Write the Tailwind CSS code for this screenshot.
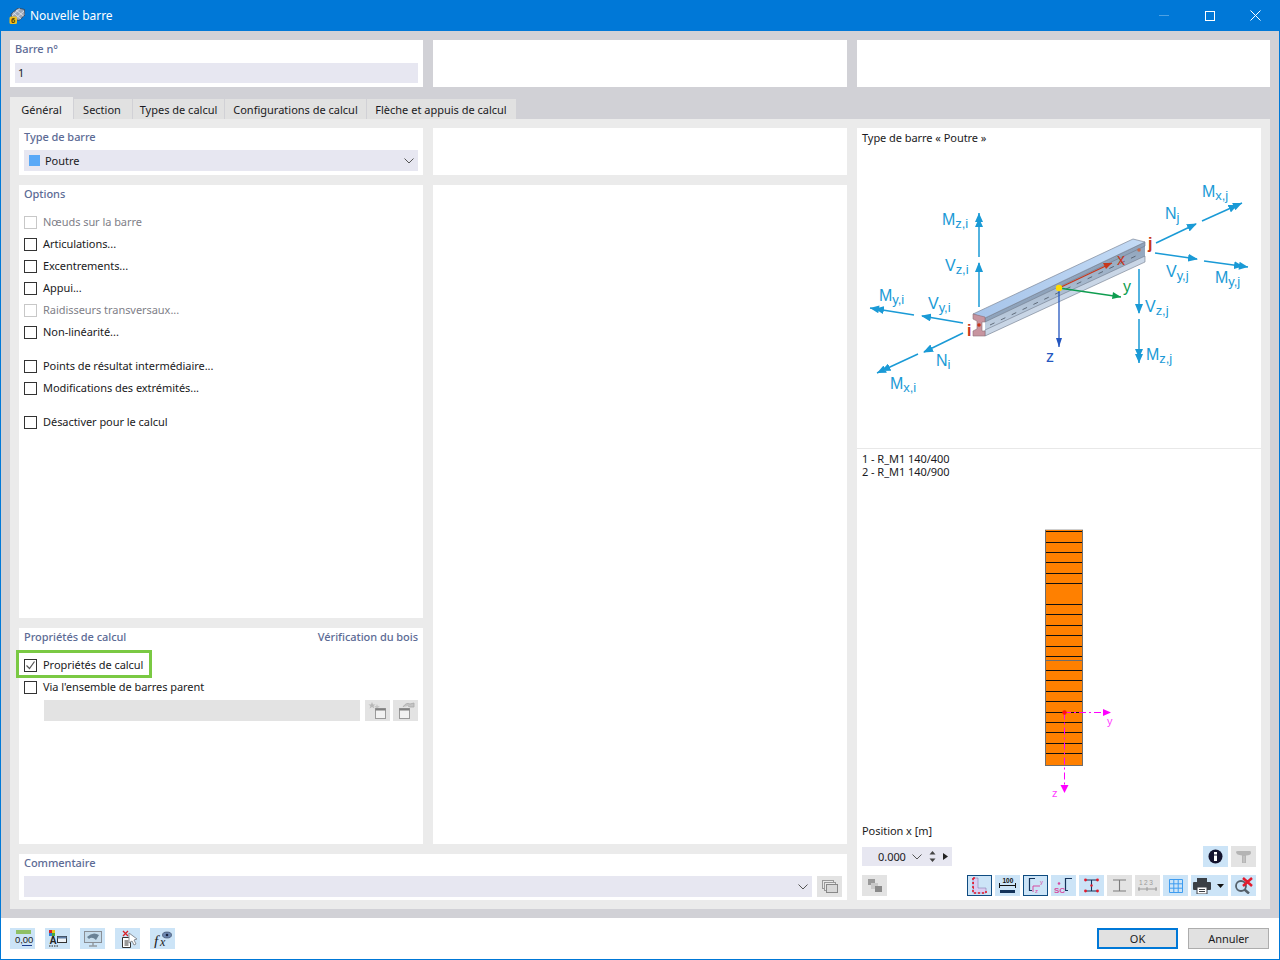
<!DOCTYPE html>
<html lang="fr">
<head>
<meta charset="UTF-8">
<title>Nouvelle barre</title>
<script src="https://cdn.jsdelivr.net/npm/@tailwindcss/browser@4"></script>
</head>
<body class="bg-white font-['Noto_Sans',sans-serif] text-[11px] leading-none tracking-[-0.05px] text-[#1a1a22]">
<div class="w-[1280px] h-[960px] flex flex-col border-x border-b border-[#0078d7] overflow-hidden">

  <!-- Title bar -->
  <div class="h-[31px] -mx-px bg-[#0078d7] flex items-center text-white text-[12px] shrink-0">
    <svg class="ml-[9px] w-[16px] h-[16px]" viewBox="0 0 16 16">
      <path d="M2 6 L9 0 L15.500 1.500 L16 7 L10 12.500 L3 10.500 Z" fill="#9aa6b8" stroke="#2e3644" stroke-width=".7"/>
      <path d="M4 4.500 L12 11 M7 2 L14.500 8 M3 8 L11 .5 M6 11 L15 3" stroke="#eef1f5" stroke-width=".7"/>
      <rect x=".5" y="8.500" width="7.500" height="7.500" rx="1.500" fill="#f0c01e"/>
      <text x="2" y="15" font-size="7.500" font-weight="700" fill="#4f3c00" font-family="Liberation Sans, sans-serif">6</text>
    </svg>
    <span class="ml-[5px]">Nouvelle barre</span>
    <div class="ml-auto flex items-center">
      <div class="w-[10px] h-px bg-[#4da1e3] mr-[36px]"></div>
      <div class="w-[10px] h-[10px] border border-white mr-[35px]"></div>
      <svg class="w-[11px] h-[11px] mr-[19px]" viewBox="0 0 11 11"><path d="M.5 .5 L10.500 10.500 M10.500 .5 L.5 10.500" stroke="#fff" stroke-width="1"/></svg>
    </div>
  </div>

  <!-- Dialog body -->
  <div class="flex-1 bg-[#d1d1d6] px-[9px] pt-[9px] flex flex-col">
    <div class="grid grid-cols-[413px_414px_413px] gap-x-[10px] h-[47px] shrink-0">
      <div class="bg-white px-[5px]">
        <div class="h-[23px] pt-[3px] text-[#5c6b95] font-medium">Barre n°</div>
        <div class="h-[20px] bg-[#e7e7f1] flex items-center px-[3px]"><span class="pb-[2px]">1</span></div>
      </div>
      <div class="bg-white"></div>
      <div class="bg-white"></div>
    </div>

    <!-- Tabs -->
    <div class="flex items-end h-[22px] mt-[10px] shrink-0 gap-px tracking-normal">
      <div class="h-[22px] w-[63px] bg-[#ebebeb] flex items-center justify-center pt-[2px]">Général</div>
      <div class="h-[20px] w-[58px] bg-[#e1e1e1] flex items-center justify-center pr-[2px]">Section</div>
      <div class="h-[20px] w-[91px] bg-[#e1e1e1] flex items-center justify-center">Types de calcul</div>
      <div class="h-[20px] w-[141px] bg-[#e1e1e1] flex items-center justify-center">Configurations de calcul</div>
      <div class="h-[20px] w-[149px] bg-[#e1e1e1] flex items-center justify-center pr-[1px]">Flèche et appuis de calcul</div>
    </div>

    <div class="h-[790px] bg-[#ebebeb] p-[9px] flex gap-x-[10px]">
      <!-- Left area -->
      <div class="w-[828px] flex flex-col gap-y-[10px]">
        <div class="h-[716px] grid grid-cols-[404px_414px] gap-x-[10px]">
          <div class="flex flex-col gap-y-[10px]">
            <div class="h-[47px] bg-white px-[5px]">
              <div class="h-[22px] pt-[3px] text-[#5c6b95] font-medium">Type de barre</div>
              <div class="h-[21px] bg-[#e7e7f1] flex items-center pl-[5px] pr-[4px]">
                <span class="w-[11px] h-[11px] bg-[#5aa9f7] mr-[5px]"></span>Poutre
                <svg class="ml-auto w-[10px] h-[6px]" viewBox="0 0 10 6"><path d="M.5 .5 L5 5 L9.500 .5" fill="none" stroke="#555" stroke-width="1"/></svg>
              </div>
            </div>
            <div class="h-[433px] bg-white px-[5px]">
              <div class="h-[26px] pt-[3px] text-[#5c6b95] font-medium">Options</div>
              <div class="h-[22px] flex items-center text-[#808088]"><span class="w-[13px] h-[13px] border border-[#c8c8c8] mr-[6px]"></span><span class="pb-[2px]">Nœuds sur la barre</span></div>
              <div class="h-[22px] flex items-center"><span class="w-[13px] h-[13px] border border-[#333] mr-[6px]"></span><span class="pb-[2px]">Articulations...</span></div>
              <div class="h-[22px] flex items-center"><span class="w-[13px] h-[13px] border border-[#333] mr-[6px]"></span><span class="pb-[2px]">Excentrements...</span></div>
              <div class="h-[22px] flex items-center"><span class="w-[13px] h-[13px] border border-[#333] mr-[6px]"></span><span class="pb-[2px]">Appui...</span></div>
              <div class="h-[22px] flex items-center text-[#808088]"><span class="w-[13px] h-[13px] border border-[#c8c8c8] mr-[6px]"></span><span class="pb-[2px]">Raidisseurs transversaux...</span></div>
              <div class="h-[22px] flex items-center"><span class="w-[13px] h-[13px] border border-[#333] mr-[6px]"></span><span class="pb-[2px]">Non-linéarité...</span></div>
              <div class="h-[22px] mt-[12px] flex items-center"><span class="w-[13px] h-[13px] border border-[#333] mr-[6px]"></span><span class="pb-[2px]">Points de résultat intermédiaire...</span></div>
              <div class="h-[22px] flex items-center"><span class="w-[13px] h-[13px] border border-[#333] mr-[6px]"></span><span class="pb-[2px]">Modifications des extrémités...</span></div>
              <div class="h-[22px] mt-[12px] flex items-center"><span class="w-[13px] h-[13px] border border-[#333] mr-[6px]"></span><span class="pb-[2px]">Désactiver pour le calcul</span></div>
            </div>
            <div class="h-[216px] bg-white px-[5px]">
              <div class="h-[26px] pt-[3px] flex justify-between text-[#5c6b95] font-medium"><span>Propriétés de calcul</span><span>Vérification du bois</span></div>
              <div class="relative h-[22px] flex items-center">
                <div class="absolute left-[-8px] top-[-4px] w-[136px] h-[28px] border-[3px] border-[#7ac943]"></div>
                <span class="w-[13px] h-[13px] border border-[#333] mr-[6px] flex items-center justify-center">
                  <svg class="w-[11px] h-[11px]" viewBox="0 0 11 11"><path d="M1.500 5.500 L4.500 8.500 L9.500 1.500" fill="none" stroke="#555" stroke-width="1.200"/></svg>
                </span><span class="pb-[2px]">Propriétés de calcul</span>
              </div>
              <div class="h-[22px] flex items-center"><span class="w-[13px] h-[13px] border border-[#333] mr-[6px]"></span><span class="pb-[2px]">Via l'ensemble de barres parent</span></div>
              <div class="flex mt-[2px] ml-[20px] h-[21px]">
                <div class="w-[316px] bg-[#e3e3e3]"></div>
                <div class="w-[25px] ml-[5px] bg-[#e3e3e3] flex items-center justify-center">
                  <svg class="w-[20px] h-[17px]" viewBox="0 0 20 17"><path d="M4 0 L5 2.500 L7.500 2.500 L5.500 4 L6.500 6.500 L4 5 L1.500 6.500 L2.500 4 L.5 2.500 L3 2.500 Z" fill="#b8b8b8"/><path d="M9 2 L9.800 4 L12 4 L10.300 5.300 L11 7.500 L9 6.300 L7 7.500 L7.700 5.300 L6 4 L8.200 4 Z" fill="#c6c6c6"/><rect x="7.500" y="6.500" width="10" height="10" fill="#f2f2f2" stroke="#9a9a9a"/><rect x="7.500" y="6.500" width="10" height="2" fill="#7f7f7f"/></svg>
                </div>
                <div class="w-[25px] ml-[3px] bg-[#e3e3e3] flex items-center justify-center">
                  <svg class="w-[20px] h-[17px]" viewBox="0 0 20 17"><rect x="3.500" y="6.500" width="10" height="10" fill="#f2f2f2" stroke="#9a9a9a"/><rect x="3.500" y="6.500" width="10" height="2" fill="#7f7f7f"/><path d="M7 5 Q10 0 14 2 L18 1 L18 5 L14 5 L12 4" fill="#c4c4c4" stroke="#aaa" stroke-width=".8"/></svg>
                </div>
              </div>
            </div>
          </div>
          <div class="flex flex-col gap-y-[10px]">
            <div class="h-[47px] bg-white"></div>
            <div class="flex-1 bg-white"></div>
          </div>
        </div>
        <!-- Comment -->
        <div class="h-[46px] bg-white px-[5px]">
          <div class="h-[22px] pt-[3px] text-[#5c6b95] font-medium">Commentaire</div>
          <div class="flex h-[21px]">
            <div class="w-[789px] bg-[#e7e7f1] flex items-center justify-end pr-[4px]">
              <svg class="w-[10px] h-[6px]" viewBox="0 0 10 6"><path d="M.5 .5 L5 5 L9.500 .5" fill="none" stroke="#555"/></svg>
            </div>
            <div class="w-[25px] ml-[5px] bg-[#e3e3e3] flex items-center justify-center">
              <svg class="w-[16px] h-[13px]" viewBox="0 0 16 13"><rect x=".5" y=".5" width="11" height="8" fill="#e8e8e8" stroke="#999"/><rect x="2.500" y="2.500" width="11" height="8" fill="#e8e8e8" stroke="#999"/><rect x="4.500" y="4.500" width="11" height="8" fill="#d8d8d8" stroke="#888"/></svg>
            </div>
          </div>
        </div>
      </div>

      <!-- Right preview panel -->
      <div class="w-[404px] bg-white flex flex-col">
        <div class="h-[321px] border-b border-[#e8e8e8] pl-[5px]">
          <div class="pt-[4px] h-[42px]">Type de barre « Poutre »</div>
          <svg class="-ml-[2px] block" width="400" height="240" viewBox="0 0 400 240" font-family="Liberation Sans, sans-serif">
            <defs>
              <linearGradient id="web" x1="0" y1="0" x2="0" y2="1"><stop offset="0" stop-color="#8fa3bb"/><stop offset="1" stop-color="#c3d2e4"/></linearGradient>
              <linearGradient id="top" x1="0" y1="0" x2="1" y2="0"><stop offset="0" stop-color="#a6c4ea"/><stop offset="1" stop-color="#c4dbf5"/></linearGradient>
              <marker id="b" markerWidth="10" markerHeight="8" refX="9" refY="4" orient="auto" markerUnits="userSpaceOnUse"><path d="M0 0 L10 4 L0 8 Z" fill="#1a9ad6"/></marker>
              <marker id="bb" markerWidth="15" markerHeight="8" refX="14" refY="4" orient="auto" markerUnits="userSpaceOnUse"><path d="M0 0 L9 4 L0 8 Z M5 0 L14 4 L5 8 Z" fill="#1a9ad6"/></marker>
            </defs>
            <g stroke="#1a9ad6" stroke-width="1.500" fill="none">
              <path d="M119 137 L119 93" marker-end="url(#b)"/>
              <path d="M119 87 L119 43" marker-end="url(#bb)"/>
              <path d="M342 51 L382 33" marker-end="url(#bb)"/>
              <path d="M296 73 L336 54" marker-end="url(#b)"/>
              <path d="M295 83 L337 89" marker-end="url(#b)"/>
              <path d="M344 91 L388 97" marker-end="url(#bb)"/>
              <path d="M279 99 L279 143" marker-end="url(#b)"/>
              <path d="M279 149 L279 193" marker-end="url(#bb)"/>
              <path d="M103 153 L62 146" marker-end="url(#b)"/>
              <path d="M54 145 L10 138" marker-end="url(#bb)"/>
              <path d="M103 163 L64 182" marker-end="url(#b)"/>
              <path d="M58 184 L17 203" marker-end="url(#bb)"/>
            </g>
            <!-- beam -->
            <path d="M125 148 L285 72 L285 90 L125 166 Z" fill="url(#web)"/>
            <path d="M125 160 L285 86 L285 92 L125 166 Z" fill="#c9d6e6" stroke="#717b8c" stroke-width=".6"/>
            <path d="M125 148 L285 72 L285 76 L125 152 Z" fill="#8fa3bb" stroke="#717b8c" stroke-width=".6"/>
            <path d="M113 144 L273 69 L285 72 L125 148 Z" fill="url(#top)" stroke="#7d8798" stroke-width=".7"/>
            <path d="M130 155 L280 84" stroke="#4a5462" stroke-width=".8" stroke-dasharray="5 7"/>
            <path d="M113 144 L125 147 L125 152 L122 152 L122 161 L125 161 L125 166 L113 166 L113 161 L117 159 L117 151 L113 149 Z" fill="#c7949f" stroke="#8d6f78" stroke-width=".6"/>
            <circle cx="119" cy="155" r="1.800" fill="#c8361a"/>
            <circle cx="279" cy="80" r="1.800" fill="#c96a4a"/>
            <!-- local axes -->
            <path d="M199 118 L199 177" stroke="#2456bf" stroke-width="1.300"/>
            <path d="M196 168 L202 168 L199 177 Z" fill="#2456bf"/>
            <path d="M199 118 L252 93" stroke="#c8361a" stroke-width="1.300"/>
            <path d="M243 93 L252 93 L246 99 Z" fill="#c8361a"/>
            <path d="M199 118 L261 127" stroke="#0f9d50" stroke-width="1.300"/>
            <path d="M253 122 L261 127 L252 129 Z" fill="#0f9d50"/>
            <circle cx="199" cy="118" r="3.200" fill="#ffdc00"/>
            <g fill="#1a9ad6" font-size="16">
              <text x="82" y="55">M<tspan font-size="13" dy="3">z,i</tspan></text>
              <text x="85" y="101">V<tspan font-size="13" dy="3">z,i</tspan></text>
              <text x="19" y="131">M<tspan font-size="13" dy="3">y,i</tspan></text>
              <text x="68" y="139">V<tspan font-size="13" dy="3">y,i</tspan></text>
              <text x="76" y="196">N<tspan font-size="13" dy="3">i</tspan></text>
              <text x="30" y="219">M<tspan font-size="13" dy="3">x,i</tspan></text>
              <text x="305" y="49">N<tspan font-size="13" dy="3">j</tspan></text>
              <text x="342" y="27">M<tspan font-size="13" dy="3">x,j</tspan></text>
              <text x="306" y="107">V<tspan font-size="13" dy="3">y,j</tspan></text>
              <text x="355" y="113">M<tspan font-size="13" dy="3">y,j</tspan></text>
              <text x="285" y="142">V<tspan font-size="13" dy="3">z,j</tspan></text>
              <text x="286" y="190">M<tspan font-size="13" dy="3">z,j</tspan></text>
            </g>
            <text x="107" y="166" font-size="16" font-weight="700" fill="#c8361a">i</text>
            <text x="288" y="79" font-size="16" font-weight="700" fill="#c8361a">j</text>
            <text x="257" y="95" font-size="16" fill="#c8361a">x</text>
            <text x="263" y="122" font-size="16" fill="#0f9d50">y</text>
            <text x="186" y="192" font-size="16" fill="#2456bf">z</text>
          </svg>
        </div>

        <div class="pl-[5px] pt-[3px] leading-[13px] h-[30px]">1 - R_M1 140/400<br>2 - R_M1 140/900</div>
        <svg class="block ml-[180px] mt-[50px]" width="90" height="280" viewBox="0 0 90 280" font-family="Liberation Sans, sans-serif">
          <rect x="8.500" y="0.500" width="37" height="236" fill="#ff8000" stroke="#6e6e6e"/>
          <path d="M8 0.500H46" stroke="#cfcfcf"/>
          <path d="M9 2.500H45M9 13.500H45M9 23.500H45M9 33.500H45M9 44.500H45M9 54.500H45M9 75.500H45M9 85.500H45M9 96.500H45M9 106.500H45M9 117.500H45M9 127.500H45M9 141.500H45M9 151.500H45M9 162.500H45M9 172.500H45M9 183.500H45M9 193.500H45M9 203.500H45M9 214.500H45M9 224.500H45" stroke="#111" stroke-width="1"/>
          <path d="M9 131.500H45" stroke="#6e6e6e" stroke-width="1"/>
          <path d="M27 183.500H70M27.500 183.500V260" stroke="#ff00ff" stroke-width="1" stroke-dasharray="7 3 2 3" fill="none"/>
          <path d="M66 180 L74 183.500 L66 187 Z M23.500 256 L31.500 256 L27.500 264 Z" fill="#ff00ff"/>
          <circle cx="27.500" cy="183.500" r="2.200" fill="#ff1010"/>
          <text x="70" y="196" font-size="11" fill="#ff40ff">y</text>
          <text x="15" y="268" font-size="11" fill="#ff40ff">z</text>
        </svg>
        <div class="pl-[5px] mt-[13px] h-[16px] flex items-center">Position x [m]</div>
        <div class="flex items-center h-[21px] mt-[8px] pl-[5px] pr-[5px]">
          <div class="w-[90px] h-[19px] bg-[#e7e7f1] flex items-center pl-[16px]">
            <span>0.000</span>
            <svg class="ml-[6px] w-[10px] h-[6px]" viewBox="0 0 10 6"><path d="M.5 .5 L5 5 L9.500 .5" fill="none" stroke="#555"/></svg>
            <svg class="ml-[7px] w-[7px] h-[11px]" viewBox="0 0 7 11"><path d="M3.500 0 L6.500 3.500 H.5 Z M3.500 11 L6.500 7.500 H.5 Z" fill="#444"/></svg>
            <svg class="ml-[7px] w-[5px] h-[7px]" viewBox="0 0 5 7"><path d="M0 0 L5 3.500 L0 7 Z" fill="#222"/></svg>
          </div>
          <div class="ml-auto w-[25px] h-[21px] bg-[#cce4f7] flex items-center justify-center">
            <svg class="w-[15px] h-[15px]" viewBox="0 0 15 15"><circle cx="7.500" cy="7.500" r="7" fill="#13132e"/><rect x="6" y="6.500" width="3" height="5.500" fill="#fff"/><rect x="6" y="3" width="3" height="2.500" fill="#fff"/></svg>
          </div>
          <div class="ml-[3px] w-[25px] h-[21px] bg-[#e3e3e3] flex items-center justify-center">
            <svg class="w-[17px] h-[14px]" viewBox="0 0 17 14"><path d="M1 2 Q1 1 3 1 H15 Q16 1 16 3 Q16 5 11 5.500 V13 H7 V5.500 Q1 5 1 2 Z" fill="#b4b4b4"/><path d="M9 6 V12.500" stroke="#d0d0d0"/></svg>
          </div>
        </div>
        <div class="flex items-center h-[21px] mt-[8px] pl-[5px]">
          <div class="w-[25px] h-[21px] bg-[#e3e3e3] flex items-center justify-center">
            <svg class="w-[16px] h-[15px]" viewBox="0 0 16 15"><rect x="1" y="1" width="7" height="6" fill="#9a9a9a"/><rect x="4" y="5" width="7" height="6" fill="#c9c9c9"/><rect x="8" y="8" width="7" height="6" fill="#8a8a8a"/></svg>
          </div>
          <div class="ml-[80px] w-[25px] h-[21px] bg-[#cce4f7] border border-[#0f4c81] flex items-center justify-center">
            <svg class="w-[17px] h-[17px]" viewBox="0 0 17 17"><path d="M2 1 H7 V11 H15 V16 H2 Z" fill="#d9cdf2" stroke="#7b6fa0" stroke-width=".5"/><path d="M2 1H6M2 1V16H15V12M2 6H3M2 11H3" fill="none" stroke="#e21b2d" stroke-width="1.600" stroke-dasharray="2 2"/></svg>
          </div>
          <div class="ml-[3px] w-[25px] h-[21px] bg-[#cce4f7] flex items-center justify-center">
            <svg class="w-[21px] h-[17px]" viewBox="0 0 21 17" font-family="Liberation Sans, sans-serif"><text x="5.500" y="6" font-size="6.500" font-weight="700" fill="#111">100</text><path d="M2 8.500 H19 M2.500 6 V11 M18.500 6 V11" stroke="#111"/><rect x="3" y="13" width="15" height="3" fill="#14335a"/></svg>
          </div>
          <div class="ml-[3px] w-[25px] h-[21px] bg-[#cce4f7] border border-[#0f4c81] flex items-center justify-center">
            <svg class="w-[19px] h-[17px]" viewBox="0 0 19 17" font-family="Liberation Sans, sans-serif"><path d="M9 1.500 H3.500 V13.500 H6" fill="none" stroke="#14335a" stroke-width="1.200"/><path d="M7 9 V15 M7 9 H14" stroke="#d64aa0" fill="none"/><text x="14" y="7" font-size="6" fill="#d64aa0">y</text><text x="9" y="16" font-size="6" fill="#d64aa0">z</text></svg>
          </div>
          <div class="ml-[3px] w-[25px] h-[21px] bg-[#cce4f7] flex items-center justify-center">
            <svg class="w-[21px] h-[17px]" viewBox="0 0 21 17" font-family="Liberation Sans, sans-serif"><path d="M19 1.500 H12.500 V13.500 H15" fill="none" stroke="#14335a" stroke-width="1.200"/><circle cx="6" cy="6.500" r="1.300" fill="#d64aa0"/><text x="1" y="15.500" font-size="8" font-weight="700" fill="#d64aa0">SC</text></svg>
          </div>
          <div class="ml-[3px] w-[25px] h-[21px] bg-[#cce4f7] flex items-center justify-center">
            <svg class="w-[17px] h-[17px]" viewBox="0 0 17 17"><path d="M3 3 H14 M3 14 H14 M8.500 3 V14" stroke="#14335a" stroke-width="1.100"/><g fill="#e21b2d"><circle cx="2.500" cy="3" r="1.400"/><circle cx="14.500" cy="3" r="1.400"/><circle cx="2.500" cy="14" r="1.400"/><circle cx="14.500" cy="14" r="1.400"/><circle cx="8.500" cy="8.500" r="1.200"/></g></svg>
          </div>
          <div class="ml-[3px] w-[25px] h-[21px] bg-[#e3e3e3] flex items-center justify-center">
            <svg class="w-[17px] h-[17px]" viewBox="0 0 17 17"><path d="M2 3 H15 M2 14 H15 M8.500 3 V14" stroke="#7c7c7c" stroke-width="1.100"/></svg>
          </div>
          <div class="ml-[3px] w-[25px] h-[21px] bg-[#e3e3e3] flex items-center justify-center">
            <svg class="w-[21px] h-[17px]" viewBox="0 0 21 17" font-family="Liberation Sans, sans-serif"><text x="2" y="8" font-size="6.500" letter-spacing="1.500" fill="#9a9a9a">123</text><path d="M1 12 H20 M2 10 V14 M10 10 V14 M19 10 V14" stroke="#9a9a9a"/></svg>
          </div>
          <div class="ml-[3px] w-[25px] h-[21px] bg-[#cce4f7] flex items-center justify-center">
            <svg class="w-[14px] h-[14px]" viewBox="0 0 14 14"><path d="M.5 .5H13.500V13.500H.5ZM.5 4.800H13.500M.5 9.200H13.500M4.800 .5V13.500M9.200 .5V13.500" fill="none" stroke="#3d9cf0"/></svg>
          </div>
          <div class="ml-[3px] w-[37px] h-[21px] bg-[#cce4f7] flex items-center pl-[2px]">
            <svg class="w-[18px] h-[16px]" viewBox="0 0 18 16"><rect x="4" y="0" width="10" height="4" fill="#3a3f46"/><rect x="0" y="4" width="18" height="8" rx="1" fill="#3a3f46"/><rect x="4" y="9" width="10" height="7" fill="#fff" stroke="#3a3f46"/><path d="M6 11.500H12M6 13.500H12" stroke="#3a3f46"/></svg>
            <svg class="ml-[6px] w-[7px] h-[4px]" viewBox="0 0 7 4"><path d="M0 0 H7 L3.500 4 Z" fill="#111"/></svg>
          </div>
          <div class="ml-[3px] w-[25px] h-[21px] bg-[#cce4f7] flex items-center justify-center">
            <svg class="w-[20px] h-[17px]" viewBox="0 0 20 17"><circle cx="7" cy="9" r="5" fill="none" stroke="#55606a" stroke-width="1.800"/><path d="M10.500 12.500 L15 16.500" stroke="#55606a" stroke-width="2.500"/><path d="M9 1 L18 9 M18 1 L9 9" stroke="#e21b2d" stroke-width="2.500"/></svg>
          </div>
        </div>
      </div>
    </div>
  </div>

  <!-- Footer -->
  <div class="h-[41px] shrink-0 bg-white flex items-center pl-[9px] pr-[10px] relative">
    <div class="flex gap-x-[10px]">
      <div class="w-[25px] h-[21px] bg-[#cce4f7] flex items-center justify-center">
        <svg class="w-[22px] h-[17px]" viewBox="0 0 22 17" font-family="Liberation Sans, sans-serif"><rect x="4" y="0" width="15" height="4" fill="#8fc065"/><text x="3" y="13" font-size="9.500" fill="#222">0,00</text><path d="M10 15.500 H20" stroke="#1f3f8f"/></svg>
      </div>
      <div class="w-[25px] h-[21px] bg-[#cce4f7] flex items-center justify-center">
        <svg class="w-[19px] h-[17px]" viewBox="0 0 19 17" font-family="Liberation Sans, sans-serif"><rect x="1" y="0" width="3" height="3" fill="#d8232a"/><rect x="4" y="0" width="3" height="3" fill="#e8c51c"/><rect x="1" y="3" width="3" height="3" fill="#2b7fd6"/><rect x="4" y="3" width="3" height="3" fill="#49a83d"/><text x="1.500" y="14" font-size="10" font-weight="700" fill="#222">A</text><rect x="9.500" y="6.500" width="9" height="6" fill="#eef3f8" stroke="#333"/><rect x="9.500" y="6.500" width="9" height="2" fill="#5d7ea8"/><path d="M1 16H10" stroke="#222" stroke-dasharray="1.500 1"/></svg>
      </div>
      <div class="w-[25px] h-[21px] bg-[#cce4f7] flex items-center justify-center">
        <svg class="w-[20px] h-[17px]" viewBox="0 0 20 17"><rect x="1.500" y="1.500" width="17" height="11" fill="#c6dcec" stroke="#8a8f96"/><path d="M4 7 Q10 1 16 5 L13 10 Q9 6 6 9 Z" fill="#6a8296"/><path d="M10 13 V15.500 M6 16 H14" stroke="#777"/></svg>
      </div>
      <div class="w-[25px] h-[21px] bg-[#cce4f7] flex items-center justify-center">
        <svg class="w-[20px] h-[18px]" viewBox="0 0 20 18"><path d="M5 1 L10 6 M10 1 L5 6" stroke="#d8232a" stroke-width="1.300"/><path d="M4.500 7.500 H11 L12.500 9 V17.500 H4.500 Z" fill="#fff" stroke="#333"/><path d="M6.500 11H10.500M6.500 13H10.500M6.500 15H10.500" stroke="#333"/><path d="M11 3 L11 13 L14 11 L16 15 L18 14 L16 10 L19 9 Z" fill="#fff" stroke="#8a8f96"/></svg>
      </div>
      <div class="w-[25px] h-[21px] bg-[#cce4f7] flex items-center justify-center">
        <svg class="w-[19px] h-[18px]" viewBox="0 0 19 18" font-family="Liberation Serif, serif"><text x="1" y="16" font-size="15" font-style="italic" fill="#222">f</text><text x="7" y="16" font-size="12" font-style="italic" fill="#222">x</text><ellipse cx="14" cy="5" rx="4.500" ry="3" fill="#6d88b0" stroke="#2b3a55" stroke-width=".6"/><circle cx="14" cy="5" r="1.300" fill="#1a2540"/></svg>
      </div>
    </div>
    <div class="ml-auto flex gap-x-[10px]">
      <div class="w-[81px] h-[21px] bg-[#e1e1e1] border-2 border-[#0078d7] flex items-center justify-center">OK</div>
      <div class="w-[81px] h-[21px] bg-[#e1e1e1] border border-[#adadad] flex items-center justify-center">Annuler</div>
    </div>
  </div>
</div>
</body>
</html>
